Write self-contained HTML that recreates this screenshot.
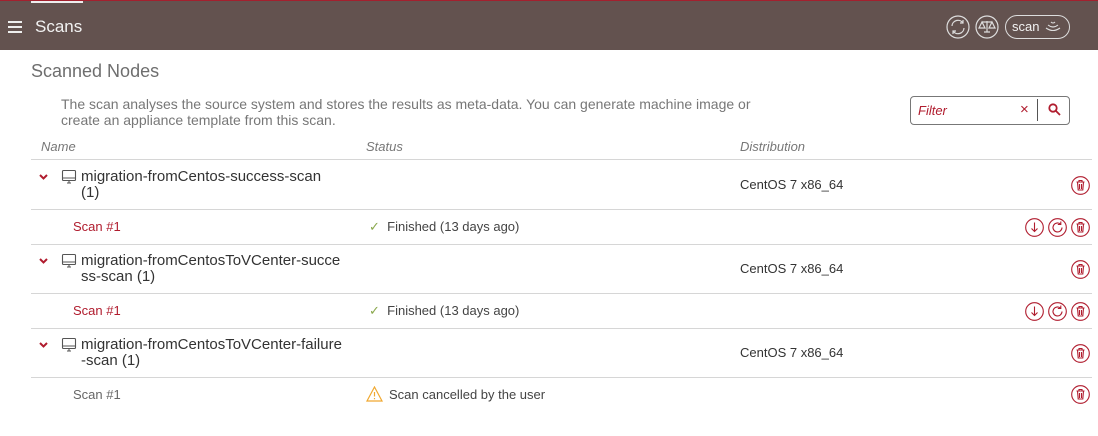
<!DOCTYPE html>
<html><head><meta charset="utf-8"><style>
*{margin:0;padding:0;box-sizing:border-box}
body{width:1098px;height:436px;overflow:hidden;background:#fff;font-family:"Liberation Sans",Arial,sans-serif;position:relative}
.hdr{position:absolute;left:0;top:0;width:1098px;height:50px;background:#63524f;border-top:1px solid #a3202e}
.tab{position:absolute;left:31px;top:0;width:52px;height:2px;background:#eee}
.abs{position:absolute;white-space:nowrap}
.line{position:absolute;left:31px;width:1061px;height:1px;background:#d6d6d6}
.nm{font-size:15px;color:#333;line-height:16px}
.scan{font-size:13px;color:#b01c2e}
.st{font-size:13px;color:#444}
.dist{font-size:13px;color:#333}
.ic{position:absolute;width:19px;height:19px}
</style></head><body>
<div class="hdr"><div class="tab"></div>
<div class="abs" style="left:8px;top:20px;width:14px;height:2px;background:#eee;box-shadow:0 5px 0 #eee,0 10px 0 #eee"></div>
<div class="abs" style="left:35px;top:16px;font-size:17px;color:#f2f2f2">Scans</div>
<svg class="abs" style="left:946px;top:14px" width="24" height="24" viewBox="0 0 24 24" fill="none" stroke="#ddd" stroke-width="1.2"><circle cx="12" cy="12" r="11"/><path d="M6 11a6 6 0 0 1 11-3M17 5v3h-3M18 13a6 6 0 0 1-11 3M7 19v-3h3"/></svg>
<svg class="abs" style="left:975px;top:14px" width="24" height="24" viewBox="0 0 24 24" fill="none" stroke="#ddd" stroke-width="1.2"><circle cx="12" cy="12" r="11"/><path d="M12 6v11M7 7h10M7 7l-3 6h6zM17 7l-3 6h6zM9 17h6"/></svg>
<div class="abs" style="left:1005px;top:14px;width:65px;height:24px;border:1.2px solid #ddd;border-radius:12px;color:#f2f2f2;font-size:13px;padding:3px 0 0 6px">scan</div>
<svg class="abs" style="left:1044px;top:18px" width="18" height="14" viewBox="0 0 18 14" fill="none" stroke="#ddd" stroke-width="1.1"><path d="M7 3q2 2 4 0M4 6q5 4 10 0M2 9q7 5 14 0"/></svg>
</div>
<div class="abs" style="left:31px;top:61px;font-size:18px;color:#6e6e6e">Scanned Nodes</div>
<div class="abs" style="left:61px;top:96px;font-size:14px;color:#777;line-height:16px">The scan analyses the source system and stores the results as meta-data. You can generate machine image or<br>create an appliance template from this scan.</div>
<div class="abs" style="left:910px;top:96px;width:160px;height:29px;border:1px solid #777;border-radius:4px"></div>
<div class="abs" style="left:918px;top:103px;font-size:13px;font-style:italic;color:#b01c2e">Filter</div>
<div class="abs" style="left:1020px;top:101px;font-size:15px;color:#b01c2e">×</div>
<div class="abs" style="left:1037px;top:99px;width:1px;height:22px;background:#555"></div>
<svg class="abs" style="left:1048px;top:103px" width="13" height="13" viewBox="0 0 13 13" fill="none" stroke="#b01c2e" stroke-width="1.8"><circle cx="5" cy="5" r="3.7"/><path d="M8 8l4 4"/></svg>
<div class="abs" style="left:41px;top:139px;font-size:13px;font-style:italic;color:#777">Name</div>
<div class="abs" style="left:366px;top:139px;font-size:13px;font-style:italic;color:#777">Status</div>
<div class="abs" style="left:740px;top:139px;font-size:13px;font-style:italic;color:#777">Distribution</div>
<div class="line" style="top:159px"></div>
<div class="line" style="top:209px"></div>
<div class="line" style="top:244px"></div>
<div class="line" style="top:293px"></div>
<div class="line" style="top:328px"></div>
<div class="line" style="top:377px"></div>

<svg class="abs" style="left:39px;top:174px" width="9" height="6" viewBox="0 0 9 6"><path d="M1 1l3.5 3.5L8 1" stroke="#b01c2e" stroke-width="2" fill="none"/></svg>
<svg class="abs" style="left:61px;top:169px" width="16" height="16" viewBox="0 0 16 16" fill="none" stroke="#555" stroke-width="1.1"><rect x="1.5" y="1.5" width="13" height="10" rx="1"/><path d="M1.5 9h13M6 14h4M8 11.5v2.5"/></svg>
<div class="abs nm" style="left:81px;top:169px">migration-fromCentos-success-scan<br>(1)</div>
<div class="abs dist" style="left:740px;top:177px">CentOS 7 x86_64</div>
<div class="abs scan" style="left:73px;top:219px">Scan #1</div>
<div class="abs st" style="left:369px;top:219px"><span style="color:#8aa84d">✓</span>&nbsp; Finished (13 days ago)</div>

<svg class="abs" style="left:39px;top:258px" width="9" height="6" viewBox="0 0 9 6"><path d="M1 1l3.5 3.5L8 1" stroke="#b01c2e" stroke-width="2" fill="none"/></svg>
<svg class="abs" style="left:61px;top:253px" width="16" height="16" viewBox="0 0 16 16" fill="none" stroke="#555" stroke-width="1.1"><rect x="1.5" y="1.5" width="13" height="10" rx="1"/><path d="M1.5 9h13M6 14h4M8 11.5v2.5"/></svg>
<div class="abs nm" style="left:81px;top:253px">migration-fromCentosToVCenter-succe<br>ss-scan (1)</div>
<div class="abs dist" style="left:740px;top:261px">CentOS 7 x86_64</div>
<div class="abs scan" style="left:73px;top:303px">Scan #1</div>
<div class="abs st" style="left:369px;top:303px"><span style="color:#8aa84d">✓</span>&nbsp; Finished (13 days ago)</div>

<svg class="abs" style="left:39px;top:342px" width="9" height="6" viewBox="0 0 9 6"><path d="M1 1l3.5 3.5L8 1" stroke="#b01c2e" stroke-width="2" fill="none"/></svg>
<svg class="abs" style="left:61px;top:337px" width="16" height="16" viewBox="0 0 16 16" fill="none" stroke="#555" stroke-width="1.1"><rect x="1.5" y="1.5" width="13" height="10" rx="1"/><path d="M1.5 9h13M6 14h4M8 11.5v2.5"/></svg>
<div class="abs nm" style="left:81px;top:337px">migration-fromCentosToVCenter-failure<br>-scan (1)</div>
<div class="abs dist" style="left:740px;top:345px">CentOS 7 x86_64</div>
<div class="abs" style="left:73px;top:387px;font-size:13px;color:#666">Scan #1</div>
<svg class="abs" style="left:366px;top:386px" width="17" height="16" viewBox="0 0 17 16" fill="none" stroke="#f0a830" stroke-width="1.2"><path d="M8.5 1L16 15H1z"/><path d="M8.5 6v4.5M8.5 12v1.2"/></svg>
<div class="abs st" style="left:389px;top:387px">Scan cancelled by the user</div>

<svg width="0" height="0" style="position:absolute"><defs>
<g id="tr" fill="none" stroke="#b01c2e" stroke-width="1.1"><circle cx="9.5" cy="9.5" r="8.8"/><path d="M5.5 6h8M8 6V4.5h3V6M6.5 6l.7 8h4.6l.7-8M8.5 8v5M10.5 8v5"/></g>
<g id="dl" fill="none" stroke="#b01c2e" stroke-width="1.1"><circle cx="9.5" cy="9.5" r="8.8"/><path d="M9.5 4.5v9M6.5 10.5l3 3 3-3"/></g>
<g id="rf" fill="none" stroke="#b01c2e" stroke-width="1.1"><circle cx="9.5" cy="9.5" r="8.8"/><path d="M14 9.5a4.5 4.5 0 1 1-1.5-3.4M12.8 3.5v3h-3"/></g>
</defs></svg>
<svg class="ic" style="left:1071px;top:176px"><use href="#tr"/></svg>
<svg class="ic" style="left:1025px;top:218px"><use href="#dl"/></svg>
<svg class="ic" style="left:1048px;top:218px"><use href="#rf"/></svg>
<svg class="ic" style="left:1071px;top:218px"><use href="#tr"/></svg>
<svg class="ic" style="left:1071px;top:260px"><use href="#tr"/></svg>
<svg class="ic" style="left:1025px;top:302px"><use href="#dl"/></svg>
<svg class="ic" style="left:1048px;top:302px"><use href="#rf"/></svg>
<svg class="ic" style="left:1071px;top:302px"><use href="#tr"/></svg>
<svg class="ic" style="left:1071px;top:344px"><use href="#tr"/></svg>
<svg class="ic" style="left:1071px;top:385px"><use href="#tr"/></svg>
</body></html>
